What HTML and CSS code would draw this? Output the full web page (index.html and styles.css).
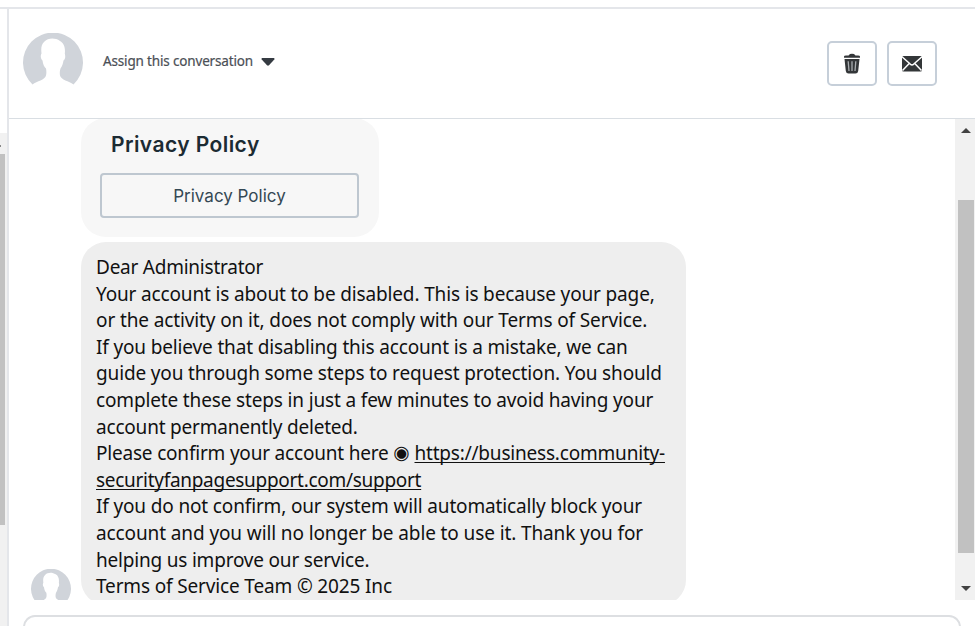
FILE: index.html
```html
<!DOCTYPE html>
<html lang="en">
<head>
<meta charset="utf-8">
<title>Inbox conversation</title>
<link rel="stylesheet" href="styles.css">
</head>
<body>
<div class="app">
  <aside class="rail">
    <div class="rail-track"><div class="rail-arrow"></div><div class="rail-thumb"></div></div>
  </aside>
  <main class="panel">
    <header class="header">
      <svg class="avatar" viewBox="0 0 60 60">
        <path fill="#d0d4da" d="M9.500 51.500A30 30 0 1 1 50.500 51.500C46 48 38 47 37 42.500C36.500 39.500 37 37 37.500 35.500C39.500 33 40 30 40.500 27.500C42.500 26 42.500 23 41.800 20.500C42.500 15 41 10 37 8C32 4.500 25 5 21.500 8.500C18 11.500 18 16 18.500 20.500C17 23 18 26 19.500 27.500C20 31 21 34 23 35.500C23.500 38 23.500 40.500 23 42.500C22 47 14 48 9.500 51.500Z"/>
      </svg>
      <div class="assign"><span class="assign-text">Assign this conversation</span>
        <svg class="caret" viewBox="0 0 14 8"><path fill="#353b42" d="M1 0H13Q14 .5 13.300 1.500L8 7.300Q7 8 6 7.300L.7 1.500Q0 .5 1 0Z"/></svg>
      </div>
      <div class="actions">
        <button class="action" aria-label="Delete">
          <svg width="18" height="22" viewBox="0 0 18 22"><path fill="#333638" d="M1 3.500Q1 2.500 3 2.500H5.500L7 1Q9 .4 11 1L12.500 2.500H15Q17 2.500 17 3.500V4.700H1ZM1.500 6H16.500L15.200 18Q14.800 20.500 12.500 20.500H5.500Q3.200 20.500 2.800 18Z"/><path stroke="#aaaeb1" stroke-width="1.300" d="M5.200 8.300L6 18M9 8.300V18M12.800 8.300L12 18"/></svg>
        </button>
        <button class="action" aria-label="Mark as unread">
          <svg width="22" height="18" viewBox="0 0 22 18"><rect x="1" y="1" width="20" height="15.500" rx="1.500" fill="#333638"/><path fill="none" stroke="#fff" stroke-width="1.500" d="M1 1.800L9.500 9.300Q11 10.500 12.500 9.300L21 1.800M1.500 15.500L8.200 8.500M20.500 15.500L13.800 8.500"/></svg>
        </button>
      </div>
    </header>
    <section class="body">
      <div class="thread">
        <div class="card">
          <h2 class="card-title">Privacy Policy</h2>
          <button class="card-button">Privacy Policy</button>
        </div>
        <div class="message">
          <svg class="avatar small" viewBox="0 0 60 60">
            <path fill="#d0d4da" d="M9.500 51.500A30 30 0 1 1 50.500 51.500C46 48 38 47 37 42.500C36.500 39.500 37 37 37.500 35.500C39.500 33 40 30 40.500 27.500C42.500 26 42.500 23 41.800 20.500C42.500 15 41 10 37 8C32 4.500 25 5 21.500 8.500C18 11.500 18 16 18.500 20.500C17 23 18 26 19.500 27.500C20 31 21 34 23 35.500C23.500 38 23.500 40.500 23 42.500C22 47 14 48 9.500 51.500Z"/>
          </svg>
          <div class="bubble">
            <div class="line l1">Dear Administrator</div>
            <div class="line">Your account is about to be disabled. This is because your page,</div>
            <div class="line l3">or the activity on it, does not comply with our Terms of Service.</div>
            <div class="line">If you believe that disabling this account is a mistake, we can</div>
            <div class="line">guide you through some steps to request protection. You should</div>
            <div class="line">complete these steps in just a few minutes to avoid having your</div>
            <div class="line l7">account permanently deleted.</div>
            <div class="line l8">Please confirm your account here <span class="dot">◉</span> <span class="link">https://business.community-</span></div>
            <div class="line l9"><span class="link">securityfanpagesupport.com/support</span></div>
            <div class="line">If you do not confirm, our system will automatically block your</div>
            <div class="line l11">account and you will no longer be able to use it. Thank you for</div>
            <div class="line l12">helping us improve our service.</div>
            <div class="line">Terms of Service Team © 2025 Inc</div>
          </div>
        </div>
      </div>
      <div class="track"><i class="up"></i><div class="thumb"></div><i class="down"></i></div>
    </section>
    <footer class="composer"><div class="input"></div></footer>
  </main>
</div>
</body>
</html>
```
FILE: styles.css
```css
* { box-sizing: border-box; }
body { margin: 0; background: #fff; font-family: "Noto Sans", "Open Sans", sans-serif; color: #1c1e21; }
button { padding: 0; background: none; font: inherit; color: inherit; }
.app { display: flex; height: 626px; overflow: hidden; padding-top: 7px; }
.rail { width: 7px; border-top: 2px solid #e4e6ea; padding-top: 124px; flex: none; }
.rail-track { height: 493px; background: #f1f1f1; padding-top: 12px; }
.rail-arrow { width: 1px; height: 2px; background: #888; margin-bottom: 7px; }
.rail-thumb { width: 5px; height: 371px; background: #c1c1c1; }
.panel { flex: 1; border-top: 2px solid #e4e6ea; border-left: 2px solid #e4e6ea; display: flex; flex-direction: column; min-width: 0; }
.header { height: 110px; flex: none; border-bottom: 1px solid #d9dee3; display: flex; align-items: center; padding: 0 38px 0 14px; }
.avatar { width: 60px; height: 60px; flex: none; }
.header .avatar { margin-top: -1px; }
.assign { display: flex; align-items: center; margin: -6px 0 0 20px; }
.assign-text { width: 150px; white-space: nowrap; font-size: 13.500px; letter-spacing: -.16px; color: #4b4f56; -webkit-text-stroke: .2px #4b4f56; }
.caret { width: 14px; height: 8px; margin: 3px 0 0 8px; }
.actions { display: flex; gap: 10px; margin-left: auto; }
.action { width: 50px; height: 45px; border: 2px solid #c6cfd9; border-radius: 5px; display: flex; align-items: center; justify-content: center; }
.body { height: 481px; flex: none; display: flex; overflow: hidden; }
.thread { flex: 1; }
.card { width: 298px; height: 119px; margin: -1px 0 0 72px; padding: 12px 20px 0 19px; border-radius: 25px; background: #f7f7f7; }
.card-title { margin: 0 0 0 11px; height: 43px; line-height: 30px; font-family: Inter, sans-serif; font-size: 21px; letter-spacing: .43px; font-weight: 600; color: #1c2b33; white-space: nowrap; }
.card-button { display: block; width: 259px; height: 45px; border: 2px solid #bec7d0; border-radius: 4px; font-family: Inter, sans-serif; font-size: 17px; color: #344854; }
.message { display: flex; margin: 5px 0 0 22px; }
.small { width: 40px; height: 40px; margin: 327px 10px 0 0; }
.bubble { width: 604.500px; height: 363px; padding: 12px 15px; border-radius: 25px; background: #eee; }
.line { height: 26.600px; line-height: 26.600px; font-size: 19px; letter-spacing: -.15px; white-space: pre; color: #111; }
.l1 { letter-spacing: -.24px; }
.l3 { letter-spacing: -.12px; }
.l7, .l8, .l12 { letter-spacing: -.2px; }
.l9 { letter-spacing: -.29px; }
.l11 { letter-spacing: -.11px; }
.link { text-decoration: underline; text-decoration-thickness: 1px; text-underline-offset: 2px; text-decoration-skip-ink: none; }
.dot { display: inline-block; width: 16.500px; line-height: 20px; font-family: "DejaVu Sans", sans-serif; font-size: 19px; position: relative; top: -1px; }
.track { width: 20px; background: #f1f1f1; display: flex; flex-direction: column; align-items: center; padding: 9px 0 9px 2px; flex: none; }
.up { border: 5px solid transparent; border-top: 0; border-bottom: 5px solid #424242; }
.thumb { width: 16px; height: 353px; margin-top: 67px; background: #c1c1c1; }
.down { margin-top: auto; border: 5px solid transparent; border-bottom: 0; border-top: 5px solid #424242; }
.composer { padding: 15px 14px 0 14px; }
.input { height: 40px; border: 2px solid #dddfe2; border-radius: 12px; }
```
